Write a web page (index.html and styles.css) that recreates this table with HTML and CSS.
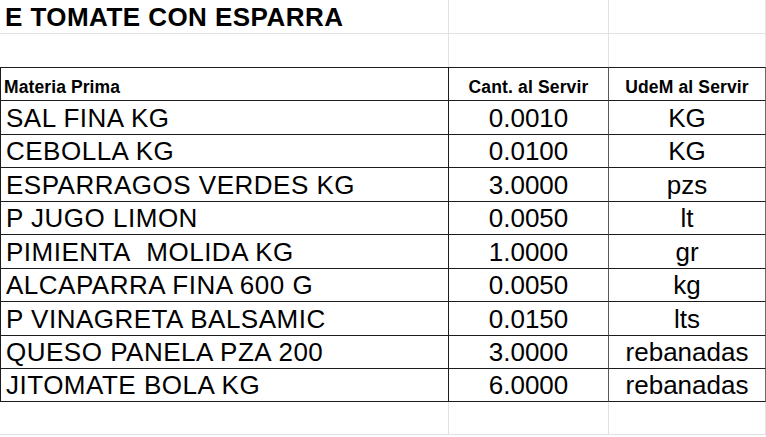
FILE: index.html
```html
<!DOCTYPE html>
<html lang="es">
<head>
<meta charset="utf-8">
<title>E TOMATE CON ESPARRA</title>
<link rel="stylesheet" href="styles.css">
</head>
<body>
<div class="sheet">
  <div class="c g title">E TOMATE CON ESPARRA</div><div class="c g"></div><div class="c g"></div>
  <div class="c g nb"></div><div class="c g nb"></div><div class="c g nb"></div>

  <div class="c t first top hdr left">Materia Prima</div><div class="c t top hdr mid">Cant. al Servir</div><div class="c t top hdr last">UdeM al Servir</div>

  <div class="c t first">SAL FINA KG</div><div class="c t mid">0.0010</div><div class="c t last">KG</div>
  <div class="c t first">CEBOLLA KG</div><div class="c t mid">0.0100</div><div class="c t last">KG</div>
  <div class="c t first">ESPARRAGOS VERDES KG</div><div class="c t mid">3.0000</div><div class="c t last">pzs</div>
  <div class="c t first">P JUGO LIMON</div><div class="c t mid">0.0050</div><div class="c t last">lt</div>
  <div class="c t first">PIMIENTA&nbsp; MOLIDA KG</div><div class="c t mid">1.0000</div><div class="c t last">gr</div>
  <div class="c t first">ALCAPARRA FINA 600 G</div><div class="c t mid">0.0050</div><div class="c t last">kg</div>
  <div class="c t first">P VINAGRETA BALSAMIC</div><div class="c t mid">0.0150</div><div class="c t last">lts</div>
  <div class="c t first">QUESO PANELA PZA 200</div><div class="c t mid">3.0000</div><div class="c t last">rebanadas</div>
  <div class="c t first">JITOMATE BOLA KG</div><div class="c t mid">6.0000</div><div class="c t last">rebanadas</div>

  <div class="c g"></div><div class="c g"></div><div class="c g"></div>
</div>
</body>
</html>
```
FILE: styles.css
```css
html, body {
  margin: 0;
  padding: 0;
  background: #ffffff;
}
body {
  font-family: "Liberation Sans", Arial, sans-serif;
  color: #000000;
  width: 766px;
  height: 437px;
  overflow: hidden;
}
.sheet {
  display: grid;
  grid-template-columns: 449px 160px 157px;
  grid-template-rows: 34px 33px 34px 34px 33px 34px 33px 34px 33px 34px 33px 33px 33px;
}
.c {
  box-sizing: border-box;
  display: flex;
  align-items: flex-end;
  font-size: 26px;
  line-height: 26px;
  padding-bottom: 3px;
  white-space: nowrap;
  overflow: visible;
}
.g {
  border-right: 1px solid #e1e1e1;
  border-bottom: 1px solid #e1e1e1;
}
.g.nb {
  border-bottom: none;
}
.title {
  font-weight: bold;
  letter-spacing: 0.45px;
  padding-left: 5px;
}
.t {
  border-bottom: 1px solid #1c1c1c;
  border-right: 1px solid #1c1c1c;
}
.t.first {
  border-left: 1px solid #1c1c1c;
  padding-left: 5px;
  letter-spacing: 0.5px;
}
.t.mid {
  justify-content: center;
  border-right: 1px solid #5a5a5a;
}
.t.last {
  justify-content: center;
  border-right: 1px solid #6a6a6a;
}
.t.top {
  border-top: 1px solid #1c1c1c;
}
.hdr {
  font-size: 17.5px;
  line-height: 17.5px;
  font-weight: bold;
  padding-bottom: 4px;
}
.t.first.hdr {
  letter-spacing: 0.1px;
}
.t.hdr.mid,
.t.hdr.last {
  letter-spacing: 0.15px;
}
.hdr.left {
  padding-left: 3px;
}
```
